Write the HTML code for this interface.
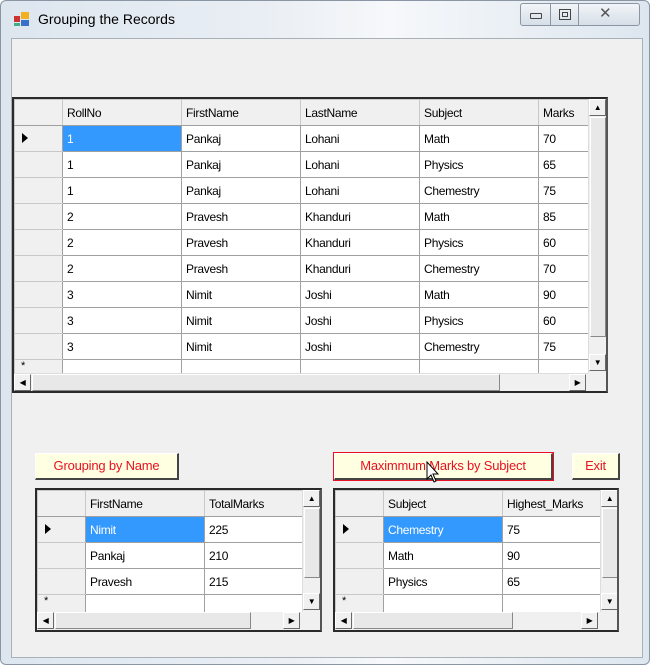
<!DOCTYPE html>
<html><head><meta charset="utf-8"><style>
*{box-sizing:border-box;margin:0;padding:0}
body{width:650px;height:665px;background:#fff;font-family:"Liberation Sans",sans-serif;font-size:12px;position:relative;overflow:hidden;letter-spacing:-0.3px}
.win{position:absolute;left:0;top:0;width:650px;height:665px;border:1px solid #8a96a4;border-radius:6px;background:linear-gradient(90deg,#dde6ef 0%,#e9eef4 40%,#f6f8fa 60%,#dde6ef 100%)}
.title{position:absolute;left:37px;top:10px;font-size:14px;color:#000;letter-spacing:0}
.client{position:absolute;left:10px;top:37px;width:632px;height:620px;background:#f0f0f0;border:1px solid #a8b0b8}
.ab{position:absolute}
.grid{position:absolute;border:2px solid #2a2a2a;border-right-color:#555;background:#ababab;overflow:hidden}
table{border-collapse:collapse;table-layout:fixed;position:absolute;left:0;top:0}
td{height:26px;border:1px solid #a0a0a0;background:#fff;padding:0 0 0 4px;white-space:nowrap;overflow:hidden;vertical-align:middle}
tr.h td{background:#f0f0f0;border-color:#c8c8c8;border-bottom:1px solid #a0a0a0}
td.rh{background:#f0f0f0;border-color:#c8c8c8;border-right:1px solid #a0a0a0;padding:0}
td.sel{background:#3399ff;color:#fff}
.vs{position:absolute;background:#f0f0f0;border-left:1px solid #ddd}
.hs{position:absolute;background:#f0f0f0}
.arr{position:absolute;width:17px;height:17px;background:#f0f0f0;border:1px solid #fff;border-right-color:#696969;border-bottom-color:#696969;font-size:8px;line-height:15px;text-align:center}
.btn{position:absolute;height:27px;background:#ffffe1;border:1px solid #fff;border-right:2px solid #444;border-bottom:2px solid #444;color:#e81123;font-size:13px;text-align:center;line-height:24px;letter-spacing:-0.2px}
.tri{display:inline-block;width:0;height:0;border-top:5px solid transparent;border-bottom:5px solid transparent;border-left:6px solid #000;margin-left:7px}
</style></head><body>
<div class="win">
<div class="ab" style="left:13px;top:11px;width:16px;height:14px">
<div class="ab" style="left:0;top:4px;width:6px;height:6px;background:#c33"></div>
<div class="ab" style="left:7px;top:0;width:8px;height:7px;background:#f0b020"></div>
<div class="ab" style="left:7px;top:8px;width:8px;height:6px;background:#3a70c8"></div>
<div class="ab" style="left:0;top:11px;width:6px;height:3px;background:#4a8"></div>
</div>
<div class="title">Grouping the Records</div>
<div class="ab" style="left:519px;top:2px;width:120px;height:23px;border:1px solid #8a96a4;border-radius:3px;background:linear-gradient(#f2f5f8,#d6dee8)">
<div class="ab" style="left:29px;top:0;width:1px;height:22px;background:#8a96a4"></div>
<div class="ab" style="left:57px;top:0;width:1px;height:22px;background:#8a96a4"></div>
<div class="ab" style="left:9px;top:9px;width:12px;height:6px;border:1px solid #444;border-radius:1px"></div>
<div class="ab" style="left:38px;top:5px;width:12px;height:11px;border:1px solid #444"><div class="ab" style="left:2px;top:2px;width:6px;height:5px;border:1px solid #444"></div></div>
<div class="ab" style="left:78px;top:0;font-size:15px;color:#555;letter-spacing:0">✕</div>
</div>
<div class="client"></div>
</div>

<!-- main grid -->
<div class="grid" style="left:12px;top:97px;width:596px;height:296px">
<table style="width:574px">
<colgroup><col style="width:48px"><col style="width:119px"><col style="width:119px"><col style="width:119px"><col style="width:119px"><col style="width:50px"></colgroup>
<tr class="h"><td class="rh"></td><td>RollNo</td><td>FirstName</td><td>LastName</td><td>Subject</td><td>Marks</td></tr>
<tr><td class="rh"><span class="tri"></span></td><td class="sel">1</td><td>Pankaj</td><td>Lohani</td><td>Math</td><td>70</td></tr>
<tr><td class="rh"></td><td>1</td><td>Pankaj</td><td>Lohani</td><td>Physics</td><td>65</td></tr>
<tr><td class="rh"></td><td>1</td><td>Pankaj</td><td>Lohani</td><td>Chemestry</td><td>75</td></tr>
<tr><td class="rh"></td><td>2</td><td>Pravesh</td><td>Khanduri</td><td>Math</td><td>85</td></tr>
<tr><td class="rh"></td><td>2</td><td>Pravesh</td><td>Khanduri</td><td>Physics</td><td>60</td></tr>
<tr><td class="rh"></td><td>2</td><td>Pravesh</td><td>Khanduri</td><td>Chemestry</td><td>70</td></tr>
<tr><td class="rh"></td><td>3</td><td>Nimit</td><td>Joshi</td><td>Math</td><td>90</td></tr>
<tr><td class="rh"></td><td>3</td><td>Nimit</td><td>Joshi</td><td>Physics</td><td>60</td></tr>
<tr><td class="rh"></td><td>3</td><td>Nimit</td><td>Joshi</td><td>Chemestry</td><td>75</td></tr>
<tr><td class="rh" style="vertical-align:top;padding-left:6px;font-size:11px">*</td><td></td><td></td><td></td><td></td><td></td></tr>
</table>
<div class="vs" style="left:574px;top:0;width:18px;height:274px">
<div class="arr" style="left:0;top:0">▲</div>
<div class="ab" style="left:1px;top:18px;width:16px;height:220px;background:#e8e8e8;border:1px solid #fff;border-right-color:#888;border-bottom-color:#888"></div>
<div class="arr" style="left:0;top:255px">▼</div>
</div>
<div class="hs" style="left:0;top:274px;width:574px;height:18px;border-top:1px solid #ddd">
<div class="arr" style="left:0;top:0">◀</div>
<div class="ab" style="left:18px;top:0;width:468px;height:17px;background:#e8e8e8;border:1px solid #fff;border-right-color:#888;border-bottom-color:#888"></div>
<div class="arr" style="left:555px;top:0">▶</div>
</div>
<div class="ab" style="left:574px;top:274px;width:18px;height:18px;background:#f0f0f0"></div>
</div>

<div class="btn" style="left:35px;top:453px;width:144px">Grouping by Name</div>
<div class="btn" style="left:334px;top:453px;width:219px;outline:1px solid #e81123">Maximmum Marks by Subject</div>
<div class="btn" style="left:572px;top:453px;width:48px">Exit</div>
<svg class="ab" style="left:426px;top:461px" width="14" height="24" viewBox="0 0 14 24"><path d="M1 1 L1 18 L5 14 L8 21 L10 20 L7 13 L12 13 Z" fill="#fff" stroke="#000" stroke-width="1"/></svg>

<!-- left small grid -->
<div class="grid" style="left:35px;top:488px;width:287px;height:144px">
<table style="width:265px">
<colgroup><col style="width:48px"><col style="width:119px"><col style="width:98px"></colgroup>
<tr class="h"><td class="rh"></td><td>FirstName</td><td>TotalMarks</td></tr>
<tr><td class="rh"><span class="tri"></span></td><td class="sel">Nimit</td><td>225</td></tr>
<tr><td class="rh"></td><td>Pankaj</td><td>210</td></tr>
<tr><td class="rh"></td><td>Pravesh</td><td>215</td></tr>
<tr><td class="rh" style="vertical-align:top;padding-left:6px;font-size:11px">*</td><td></td><td></td></tr>
</table>
<div class="vs" style="left:265px;top:0;width:18px;height:122px">
<div class="arr" style="left:0;top:0">▲</div>
<div class="ab" style="left:1px;top:18px;width:16px;height:70px;background:#e8e8e8;border:1px solid #fff;border-right-color:#888;border-bottom-color:#888"></div>
<div class="arr" style="left:0;top:103px">▼</div>
</div>
<div class="hs" style="left:0;top:122px;width:265px;height:18px">
<div class="arr" style="left:0;top:0">◀</div>
<div class="ab" style="left:18px;top:0;width:196px;height:17px;background:#e8e8e8;border:1px solid #fff;border-right-color:#888;border-bottom-color:#888"></div>
<div class="arr" style="left:246px;top:0">▶</div>
</div>
<div class="ab" style="left:265px;top:122px;width:18px;height:18px;background:#f0f0f0"></div>
</div>

<!-- right small grid -->
<div class="grid" style="left:333px;top:488px;width:286px;height:144px">
<table style="width:265px">
<colgroup><col style="width:48px"><col style="width:119px"><col style="width:98px"></colgroup>
<tr class="h"><td class="rh"></td><td>Subject</td><td>Highest_Marks</td></tr>
<tr><td class="rh"><span class="tri"></span></td><td class="sel">Chemestry</td><td>75</td></tr>
<tr><td class="rh"></td><td>Math</td><td>90</td></tr>
<tr><td class="rh"></td><td>Physics</td><td>65</td></tr>
<tr><td class="rh" style="vertical-align:top;padding-left:6px;font-size:11px">*</td><td></td><td></td></tr>
</table>
<div class="vs" style="left:265px;top:0;width:18px;height:122px">
<div class="arr" style="left:0;top:0">▲</div>
<div class="ab" style="left:1px;top:18px;width:16px;height:70px;background:#e8e8e8;border:1px solid #fff;border-right-color:#888;border-bottom-color:#888"></div>
<div class="arr" style="left:0;top:103px">▼</div>
</div>
<div class="hs" style="left:0;top:122px;width:265px;height:18px">
<div class="arr" style="left:0;top:0">◀</div>
<div class="ab" style="left:18px;top:0;width:160px;height:17px;background:#e8e8e8;border:1px solid #fff;border-right-color:#888;border-bottom-color:#888"></div>
<div class="arr" style="left:246px;top:0">▶</div>
</div>
<div class="ab" style="left:265px;top:122px;width:18px;height:18px;background:#f0f0f0"></div>
</div>
</body></html>
